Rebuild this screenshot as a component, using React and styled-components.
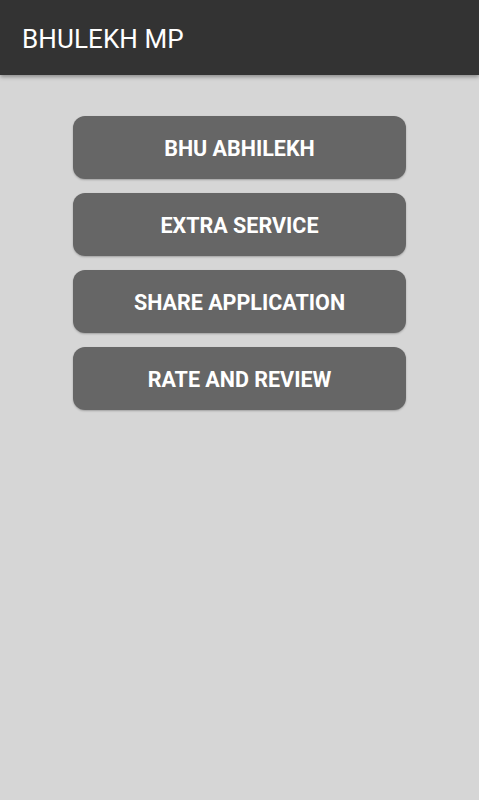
import React from "react";
import styled, { createGlobalStyle } from "styled-components";

const Global = createGlobalStyle`
  html, body { margin: 0; padding: 0; background: #d6d6d6; }
  body { font-family: Roboto, "Liberation Sans", sans-serif; }
`;

const Page = styled.div`
  min-height: 800px;
  background: #d6d6d6;
  display: flex;
  flex-direction: column;
`;

const AppBar = styled.header`
  height: 75px;
  background: #333333;
  display: flex;
  align-items: center;
  padding: 0 22px;
  box-shadow: 0 2px 4px rgba(0, 0, 0, 0.35);
  position: relative;
  z-index: 1;
`;

const Title = styled.h1`
  margin: 0;
  color: #ffffff;
  font-family: Roboto, "Liberation Sans", sans-serif;
  font-weight: 400;
  font-size: 26px;
  letter-spacing: 0.1px;
  padding-top: 2px;
`;

const Menu = styled.nav`
  display: flex;
  flex-direction: column;
  align-items: center;
  gap: 14px;
  padding-top: 41px;
`;

const MenuButton = styled.button`
  width: 333px;
  height: 63px;
  border: none;
  border-radius: 12px;
  background: #666666;
  color: #ffffff;
  font-family: Roboto, "Liberation Sans", sans-serif;
  font-weight: 700;
  font-size: 21.5px;
  text-transform: uppercase;
  padding: 1px 0 0;
  box-shadow: 0 1px 2px rgba(0, 0, 0, 0.25);
  cursor: pointer;
`;

const items = ["BHU ABHILEKH", "EXTRA SERVICE", "SHARE APPLICATION", "RATE AND REVIEW"];

export default function App() {
  return (
    <Page>
      <Global />
      <AppBar>
        <Title>BHULEKH MP</Title>
      </AppBar>
      <Menu>
        {items.map((t) => (
          <MenuButton key={t}>{t}</MenuButton>
        ))}
      </Menu>
    </Page>
  );
}
